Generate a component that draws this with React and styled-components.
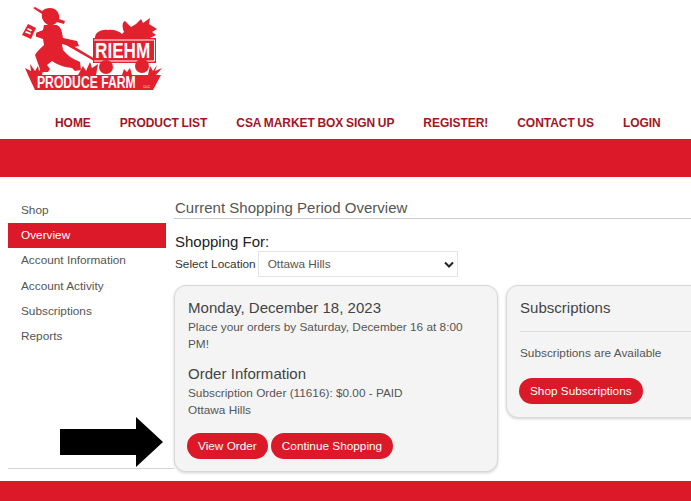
import React from "react";
import styled, { createGlobalStyle } from "styled-components";

const Global = createGlobalStyle`
  html, body {
    margin: 0;
    padding: 0;
    height: 501px;
    overflow: hidden;
    background: #fff;
    font-family: "Liberation Sans", Arial, sans-serif;
    color: #555;
  }
`;

const Page = styled.div`
  position: relative;
  width: 691px;
  height: 501px;
  overflow: hidden;
  display: flex;
  flex-direction: column;
`;

const Header = styled.header`
  height: 110px;
  flex: none;
`;

const Nav = styled.nav`
  height: 29px;
  box-sizing: border-box;
  display: flex;
  align-items: center;
  padding: 0 0 4px 55px;
  gap: 29px;
`;

const NavLink = styled.a`
  font-size: 12px;
  font-weight: bold;
  letter-spacing: -0.05px;
  word-spacing: -0.6px;
  color: #a3161f;
  white-space: nowrap;
`;

const Band = styled.div`
  height: 38px;
  background: #dc1928;
  flex: none;
`;

const Main = styled.div`
  display: flex;
  height: 304px;
  padding-left: 8px;
  flex: none;
`;

const Side = styled.aside`
  width: 166px;
  flex: none;
  box-sizing: border-box;
  padding: 20.5px 8px 0 0;
  height: 292px;
  border-bottom: 1px solid #d4d4d4;
`;

const SideItem = styled.div`
  height: 25.2px;
  box-sizing: border-box;
  padding: 0.5px 0 0 13px;
  line-height: 25px;
  font-size: 11.8px;
  color: ${(p) => (p.$active ? "#fff" : "#555")};
  background: ${(p) => (p.$active ? "#dc1928" : "transparent")};
`;

const Content = styled.main`
  width: 560px;
  flex: none;
  padding-top: 21px;
`;

const Title = styled.h2`
  margin: 0;
  font-size: 15px;
  font-weight: normal;
  line-height: 19px;
  letter-spacing: 0.02px;
  color: #555;
  padding: 0 0 1px 1px;
  border-bottom: 1px solid #ccc;
`;

const ShoppingFor = styled.h3`
  margin: 14px 0 0 1px;
  font-size: 15px;
  font-weight: normal;
  line-height: 18px;
  color: #222;
`;

const LocationRow = styled.div`
  display: flex;
  align-items: center;
  gap: 2px;
  margin-left: 1px;
  font-size: 11.8px;
  color: #333;
`;

const Select = styled.div`
  width: 200px;
  height: 26px;
  box-sizing: border-box;
  border: 1px solid #e3e3e3;
  padding: 0 3px 0 9px;
  display: flex;
  align-items: center;
  justify-content: space-between;
  color: #555;
  background: #fff;
`;

const Cards = styled.div`
  display: flex;
  align-items: flex-start;
  gap: 8px;
  margin-top: 8px;
`;

const Card = styled.section`
  width: ${(p) => p.$width}px;
  height: ${(p) => p.$height}px;
  flex: none;
  box-sizing: border-box;
  padding: 13px 13px 0;
  background: #f4f4f4;
  border: 1px solid #d9d9d9;
  border-radius: 12px;
  box-shadow: 0 1px 3px rgba(0, 0, 0, 0.18);
`;

const CardHead = styled.div`
  margin-top: ${(p) => p.$top || 0}px;
  font-size: 15px;
  line-height: 18px;
  letter-spacing: 0.03px;
  color: #444;
`;

const CardText = styled.div`
  margin-top: ${(p) => p.$top || 0}px;
  font-size: 11.8px;
  line-height: 17px;
  color: #555;
`;

const Rule = styled.hr`
  border: 0;
  border-top: 1px solid #ddd;
  margin: 14px 0 13px;
`;

const Buttons = styled.div`
  display: flex;
  gap: 3px;
  margin: ${(p) => p.$top}px 0 0 -1px;
`;

const Button = styled.button`
  height: 26px;
  border: 0;
  border-radius: 13px;
  padding: 0 11px;
  background: #dc1928;
  color: #fff;
  font-family: inherit;
  font-size: 11.8px;
  white-space: nowrap;
`;

const Arrow = styled.svg`
  position: absolute;
  left: 60px;
  top: 417px;
`;

const Footer = styled.footer`
  height: 20px;
  background: #dc1928;
  flex: none;
`;

const Logo = () => (
  <svg width="200" height="110" viewBox="0 0 200 110" fill="#e3202e">
    {/* hat and head */}
    <path d="M33 8 L35 7 L42 11 C46 7 54 7 57 11 C59 14 60 17 59 19 L65 21 L64 24 L57 22 C55 25 51 26 48 25 C44 23 41 18 42 14 Z" />
    {/* body, arms and legs */}
    <path d="M44 25 L57 25 C62 28 62 33 63 38 L77 41 L79 46 L74 47 L62 44 L63 50 C68 56 73 59 80 62 L81 70 L75 71 L72 68 C63 67 56 64 52 61 L47 65 L50 69 L48 72 L41 72 L35 55 C38 50 42 47 44 45 L43 39 L37 37 L36 33 L43 30 Z" />
    {/* sign */}
    <path d="M28 24 L36 28 L31 39 L22 35 Z" />
    <path d="M36 33 L45 30 L45 34 L36 37 Z" />
    <path d="M28 28 L32 30 L31 31.5 L27 29.5 Z M26 31 L31 33 L30 34.5 L25 32.5 Z" fill="#fff" />
    {/* wagon handle */}
    <path d="M60 38 L95 59 L94 61 L59 41 Z" />
    {/* pumpkin and produce */}
    <path d="M95 38 C95 33 100 29 108 30 C113 29 119 31 122 34 L124 32 C122 27 122 22 125 21 L131 27 L136 24 L141 19 L143 23 L150 18 L149 24 L157 29 L152 32 L156 35 L150 38 Z" />
    {/* wagon box */}
    <rect x="93" y="38" width="63" height="25" />
    <path d="M94 40 H154.5 V61 H94" fill="none" stroke="#fff" strokeWidth="1" />
    <circle cx="106" cy="67" r="7" />
    <circle cx="142" cy="66" r="7" />
    {/* grass */}
    <path d="M25 68 L31 71 L30 64 L35 71 L38 66 L39 71 L44 67 L42 75 H28 Z" />
    <path d="M78 75 L83 66 L86 71 L90 62 L92 68 L98 64 L96 75 Z" />
    <path d="M122 75 L124 69 L127 72 L130 68 L132 75 Z" />
    <path d="M148 75 L150 66 L153 71 L157 65 L155 71 L162 68 L156 75 Z" />
    {/* banner */}
    <path d="M28 75 H161 L153 90 H35 Z" />
    <text transform="translate(95 58) scale(0.78 1)" fontFamily="Liberation Sans" fontWeight="bold" fontSize="22" fill="#fff">RIEHM</text>
    <text transform="translate(37 88) scale(0.76 1)" fontFamily="Liberation Sans" fontWeight="bold" fontSize="16" fill="#fff">PRODUCE FARM</text>
    <text x="143.5" y="87.5" fontFamily="Liberation Sans" fontSize="3.5" fill="#fff">LLC</text>
  </svg>
);

const Chevron = () => (
  <svg width="10" height="7" viewBox="0 0 10 7" fill="none" stroke="#222" strokeWidth="2">
    <path d="M1 1.5 L5 5.5 L9 1.5" />
  </svg>
);

const links = ["HOME", "PRODUCT LIST", "CSA MARKET BOX SIGN UP", "REGISTER!", "CONTACT US", "LOGIN"];
const sideItems = ["Shop", "Overview", "Account Information", "Account Activity", "Subscriptions", "Reports"];

export default function App() {
  return (
    <Page>
      <Global />
      <Header>
        <Logo />
      </Header>
      <Nav>
        {links.map((l) => (
          <NavLink key={l}>{l}</NavLink>
        ))}
      </Nav>
      <Band />
      <Main>
        <Side>
          {sideItems.map((s) => (
            <SideItem key={s} $active={s === "Overview"}>
              {s}
            </SideItem>
          ))}
        </Side>
        <Content>
          <Title>Current Shopping Period Overview</Title>
          <ShoppingFor>Shopping For:</ShoppingFor>
          <LocationRow>
            Select Location
            <Select>
              Ottawa Hills
              <Chevron />
            </Select>
          </LocationRow>
          <Cards>
            <Card $width={324} $height={187}>
              <CardHead>Monday, December 18, 2023</CardHead>
              <CardText $top={2}>
                Place your orders by Saturday, December 16 at 8:00
                <br />
                PM!
              </CardText>
              <CardHead $top={12}>Order Information</CardHead>
              <CardText $top={2}>
                Subscription Order (11616): $0.00 - PAID
                <br />
                Ottawa Hills
              </CardText>
              <Buttons $top={14}>
                <Button>View Order</Button>
                <Button>Continue Shopping</Button>
              </Buttons>
            </Card>
            <Card $width={228} $height={133}>
              <CardHead>Subscriptions</CardHead>
              <Rule />
              <CardText>Subscriptions are Available</CardText>
              <Buttons $top={16}>
                <Button>Shop Subscriptions</Button>
              </Buttons>
            </Card>
          </Cards>
        </Content>
      </Main>
      <Footer />
      <Arrow width="103" height="50" viewBox="0 0 103 50">
        <path d="M0 12 H76 V0 L103 25 L76 50 V38 H0 Z" fill="#000" />
      </Arrow>
    </Page>
  );
}
